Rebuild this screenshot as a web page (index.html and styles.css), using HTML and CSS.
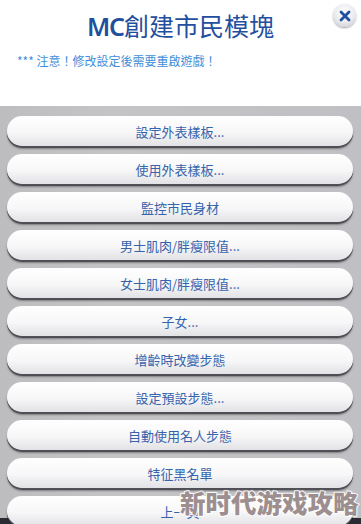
FILE: index.html
```html
<!DOCTYPE html>
<html lang="zh-Hant">
<head>
    <meta charset="UTF-8">
    <title>MC創建市民模塊</title>
    <link rel="stylesheet" href="styles.css">
</head>
<body>
    <div class="screen">
        <div class="header">
            <h1 class="title"><span class="mc">MC</span>創建市民模塊</h1>
            <p class="notice">*** 注意！修改設定後需要重啟遊戲！</p>
            <a href="#" class="close" aria-label="關閉">
                <svg width="12" height="12" viewBox="0 0 12 12">
                    <path d="M2 2 L10 10 M10 2 L2 10" stroke="#1f4f9e" stroke-width="2.8" stroke-linecap="round"/>
                </svg>
            </a>
        </div>

        <div class="menu">
            <a href="#" class="btn">設定外表樣板...</a>
            <a href="#" class="btn">使用外表樣板...</a>
            <a href="#" class="btn">監控市民身材</a>
            <a href="#" class="btn">男士肌肉/胖瘦限值...</a>
            <a href="#" class="btn">女士肌肉/胖瘦限值...</a>
            <a href="#" class="btn">子女...</a>
            <a href="#" class="btn">增齡時改變步態</a>
            <a href="#" class="btn">設定預設步態...</a>
            <a href="#" class="btn">自動使用名人步態</a>
            <a href="#" class="btn">特征黑名單</a>
            <a href="#" class="btn">上一頁</a>
        </div>

        <div class="watermark">新时代游戏攻略</div>
    </div>
</body>
</html>
```

FILE: styles.css
```css
body {
    margin: 0;
    font-family: "Noto Sans CJK TC", "Noto Sans", sans-serif;
    background-color: #2b2b33;
}
.screen {
    position: relative;
    width: 361px;
    height: 524px;
    overflow: hidden;
}
.header {
    position: relative;
    background-color: #fff;
    height: 106px;
    padding: 0 17px;
    box-sizing: border-box;
}
.title {
    margin: 0;
    padding-top: 6px;
    text-align: center;
    font-size: 25px;
    font-weight: normal;
    color: #1f4f9e;
    line-height: 38px;
}
.title .mc {
    font-family: "Noto Sans", sans-serif;
    font-weight: 600;
    letter-spacing: -1px;
}
.notice {
    margin: 8px 0 0;
    font-size: 12px;
    color: #3f8fd9;
    line-height: 16px;
}
.close {
    position: absolute;
    top: 4px;
    left: 333px;
    width: 23px;
    height: 23px;
    border-radius: 50%;
    background: radial-gradient(circle at 50% 35%, #ffffff 0%, #e9eaee 55%, #c2c4cb 100%);
    box-shadow: 0 1px 2px rgba(0,0,0,0.35);
    display: flex;
    justify-content: center;
    align-items: center;
}
.menu {
    background: linear-gradient(90deg, #bdbdc0 0%, #c4c4c6 30%, #c0c0c4 100%);
    height: 412px;
    padding: 10px 8px 0 7px;
    box-sizing: border-box;
    display: flex;
    flex-direction: column;
    gap: 8px;
}
.btn {
    flex: none;
    display: flex;
    justify-content: center;
    align-items: center;
    height: 30px;
    border-radius: 15px;
    background: linear-gradient(180deg, #ffffff 0%, #f7f7f8 55%, #e2e2e6 100%);
    box-shadow: 0 2px 0 #4f4f55, 0 3px 2px rgba(0,0,0,0.35);
    color: #3763ab;
    font-size: 13px;
    text-decoration: none;
}
.watermark {
    position: absolute;
    left: 180px;
    top: 485px;
    font-family: "Noto Sans CJK SC", sans-serif;
    font-weight: 900;
    font-size: 25.5px;
    line-height: 34px;
    color: #9d8f90;
    -webkit-text-stroke: 1.5px #ffffff;
    paint-order: stroke fill;
    text-shadow: 0 0 2px #ffffff, 0 0 2px #ffffff;
}
```
